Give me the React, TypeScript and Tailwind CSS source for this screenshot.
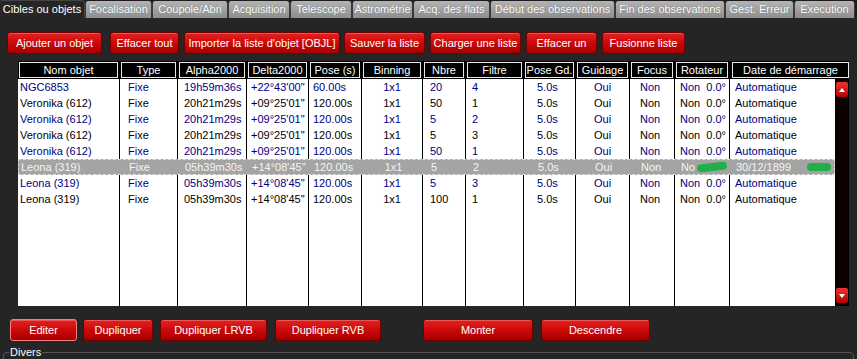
import React from 'react'

const tabs = [
  { label: 'Cibles ou objets', w: 'w-[85px]', active: true },
  { label: 'Focalisation', w: 'w-[67px]' },
  { label: 'Coupole/Abri', w: 'w-[76px]' },
  { label: 'Acquisition', w: 'w-[62px]' },
  { label: 'Telescope', w: 'w-[62px]' },
  { label: 'Astrométrie', w: 'w-[61px]' },
  { label: 'Acq. des flats', w: 'w-[77px]' },
  { label: 'Début des observations', w: 'w-[125px]' },
  { label: 'Fin des observations', w: 'w-[110px]' },
  { label: 'Gest. Erreur', w: 'w-[69px]' },
  { label: 'Execution', w: 'w-[61px]' },
]

const topButtons = [
  { label: 'Ajouter un objet', cls: 'ml-[7px] w-[95px]' },
  { label: 'Effacer tout', cls: 'ml-[8px] w-[69px]' },
  { label: "Importer la liste d'objet [OBJL]", cls: 'ml-[5px] w-[156px]' },
  { label: 'Sauver la liste', cls: 'ml-[4px] w-[81px]' },
  { label: 'Charger une liste', cls: 'ml-[5px] w-[91px]' },
  { label: 'Effacer un', cls: 'ml-[5px] w-[71px]' },
  { label: 'Fusionne liste', cls: 'ml-[5px] w-[83px]' },
]

const bottomButtons = [
  { label: 'Editer', cls: 'ml-[10px] w-[67px]', focus: true },
  { label: 'Dupliquer', cls: 'ml-[6px] w-[70px]' },
  { label: 'Dupliquer LRVB', cls: 'ml-[7px] w-[107px]' },
  { label: 'Dupliquer RVB', cls: 'ml-[8px] w-[106px]' },
  { label: 'Monter', cls: 'ml-[42px] w-[110px]' },
  { label: 'Descendre', cls: 'ml-[8px] w-[109px]' },
]

// column widths + text alignment in the data area
const cols = [
  { head: 'Nom objet', w: 'w-[102px]', cell: 'pl-[2px]' },
  { head: 'Type', w: 'w-[58px]', cell: 'pl-[8px]' },
  { head: 'Alpha2000', w: 'w-[69px]', cell: 'pl-[6px]' },
  { head: 'Delta2000', w: 'w-[62px]', cell: 'pl-[4px]' },
  { head: 'Pose (s)', w: 'w-[53px]', cell: 'pl-[4px]' },
  { head: 'Binning', w: 'w-[61px]', cell: 'justify-center' },
  { head: 'Nbre', w: 'w-[43px]', cell: 'pl-[7px]' },
  { head: 'Filtre', w: 'w-[58px]', cell: 'pl-[6px]' },
  { head: 'Pose Gd.', w: 'w-[52px]', cell: 'pl-[13px]' },
  { head: 'Guidage', w: 'w-[54px]', cell: 'pl-[18px]' },
  { head: 'Focus', w: 'w-[45px]', cell: 'pl-[10px]' },
  { head: 'Rotateur', w: 'w-[55px]', cell: 'pl-[5px]' },
]

const rows = [
  ['NGC6853', 'Fixe', '19h59m36s', '+22°43\'00"', '60.00s', '1x1', '20', '4', '5.0s', 'Oui', 'Non', 'Non  0.0°', 'Automatique'],
  ['Veronika (612)', 'Fixe', '20h21m29s', '+09°25\'01"', '120.00s', '1x1', '50', '1', '5.0s', 'Oui', 'Non', 'Non  0.0°', 'Automatique'],
  ['Veronika (612)', 'Fixe', '20h21m29s', '+09°25\'01"', '120.00s', '1x1', '5', '2', '5.0s', 'Oui', 'Non', 'Non  0.0°', 'Automatique'],
  ['Veronika (612)', 'Fixe', '20h21m29s', '+09°25\'01"', '120.00s', '1x1', '5', '3', '5.0s', 'Oui', 'Non', 'Non  0.0°', 'Automatique'],
  ['Veronika (612)', 'Fixe', '20h21m29s', '+09°25\'01"', '120.00s', '1x1', '50', '1', '5.0s', 'Oui', 'Non', 'Non  0.0°', 'Automatique'],
  ['Leona (319)', 'Fixe', '05h39m30s', '+14°08\'45"', '120.00s', '1x1', '5', '2', '5.0s', 'Oui', 'Non', 'No', '30/12/1899'],
  ['Leona (319)', 'Fixe', '05h39m30s', '+14°08\'45"', '120.00s', '1x1', '5', '3', '5.0s', 'Oui', 'Non', 'Non  0.0°', 'Automatique'],
  ['Leona (319)', 'Fixe', '05h39m30s', '+14°08\'45"', '120.00s', '1x1', '100', '1', '5.0s', 'Oui', 'Non', 'Non  0.0°', 'Automatique'],
]

const SELECTED = 5

function RedButton({ label, cls, focus }: { label: string; cls: string; focus?: boolean }) {
  return (
    <button
      className={`${cls} h-[22px] shrink-0 rounded-[3px] border ${
        focus ? 'border-[#f08080]' : 'border-[#6e0000]'
      } bg-gradient-to-b from-[#e42020] via-[#cc0808] to-[#a80000] text-white text-[11px] leading-none shadow-[inset_0_1px_0_rgba(255,255,255,0.25)]`}
    >
      {label}
    </button>
  )
}

function Blob({ cls }: { cls: string }) {
  return <span className={`${cls} inline-block h-[8px] rounded-full bg-[#1fb04a]`} />
}

function ScrollArrow({ up }: { up?: boolean }) {
  return (
    <div className="w-[12px] h-[15px] rounded-[2px] bg-gradient-to-b from-[#f03030] to-[#b00000] flex items-center justify-center">
      <svg width="6" height="4" viewBox="0 0 6 4">
        <path d={up ? 'M0 4 L3 0 L6 4 Z' : 'M0 0 L3 4 L6 0 Z'} fill="#fff" />
      </svg>
    </div>
  )
}

export default function App() {
  return (
    <div
      className="w-[857px] h-[359px] overflow-hidden bg-[#252525] flex flex-col text-[11px]"
      style={{ fontFamily: '"Liberation Sans", Arial, sans-serif' }}
    >
      {/* tabs */}
      <div className="h-[18px] shrink-0 flex items-end bg-[#1c1c1c]">
        {tabs.map((t) =>
          t.active ? (
            <div
              key={t.label}
              className={`${t.w} h-[18px] flex items-center justify-center bg-[#252525] text-white rounded-t-[3px] border-t border-r border-[#444]`}
            >
              {t.label}
            </div>
          ) : (
            <div
              key={t.label}
              className={`${t.w} h-[17px] flex items-center justify-center bg-gradient-to-b from-[#b4b4b4] to-[#8e8e8e] text-white rounded-t-[3px] border-l border-r border-[#3a3a3a] [text-shadow:0_0_1px_#666]`}
            >
              {t.label}
            </div>
          ),
        )}
      </div>

      {/* top buttons */}
      <div className="flex shrink-0 mt-[14px]">
        {topButtons.map((b) => (
          <RedButton key={b.label} label={b.label} cls={b.cls} />
        ))}
      </div>

      {/* list */}
      <div className="ml-[18px] mt-[7px] w-[831px] h-[245px] shrink-0 flex flex-col bg-black">
        <div className="h-[18px] shrink-0 flex text-white">
          {cols.map((c) => (
            <div key={c.head} className={`${c.w} h-full pl-[1px] pr-[2px] pt-[1px] pb-[1px]`}>
              <div className="h-full border border-[#e8e8e8] flex items-center justify-center">{c.head}</div>
            </div>
          ))}
          <div className="flex-1 h-full pl-[2px] pt-[1px] pb-[1px]">
            <div className="h-full border border-[#e8e8e8] flex items-center justify-center">Date de démarrage</div>
          </div>
        </div>

        <div className="flex-1 flex">
          <div className="w-[817px] bg-white flex flex-col">
            {rows.map((r, i) => {
              const sel = i === SELECTED
              const color = sel ? 'text-[#f4f4f4]' : i % 2 === 0 ? 'text-[#000080]' : 'text-black'
              return (
                <div
                  key={i}
                  className={`h-[16px] shrink-0 flex ${color} ${
                    sel ? 'bg-[#a4a4a4] border border-dashed border-[#e0e0e0]' : ''
                  }`}
                >
                  {cols.map((c, j) => (
                    <div
                      key={c.head}
                      className={`${c.w} h-full flex items-center whitespace-pre ${c.cell} ${
                        sel ? '' : 'border-r border-black'
                      }`}
                    >
                      {r[j]}
                      {sel && j === 11 && <Blob cls="ml-[2px] w-[30px] -rotate-6" />}
                    </div>
                  ))}
                  <div className="flex-1 h-full flex items-center pl-[5px]">
                    {r[12]}
                    {sel && <Blob cls="ml-[16px] w-[24px]" />}
                  </div>
                </div>
              )
            })}
            <div className="flex-1 flex">
              {cols.map((c) => (
                <div key={c.head} className={`${c.w} h-full border-r border-black`} />
              ))}
            </div>
          </div>
          <div className="w-[13px] bg-[#0d0000] flex flex-col justify-between py-[3px] pl-[1px]">
            <ScrollArrow up />
            <ScrollArrow />
          </div>
        </div>
      </div>

      {/* bottom buttons */}
      <div className="flex shrink-0 mt-[13px]">
        {bottomButtons.map((b) => (
          <RedButton key={b.label} label={b.label} cls={b.cls} focus={b.focus} />
        ))}
      </div>

      <fieldset className="mx-[3px] mt-[3px] h-[40px] shrink-0 border border-[#555] rounded-[4px] px-[5px]">
        <legend className="text-white text-[11px] px-[1px]">Divers</legend>
      </fieldset>
    </div>
  )
}
